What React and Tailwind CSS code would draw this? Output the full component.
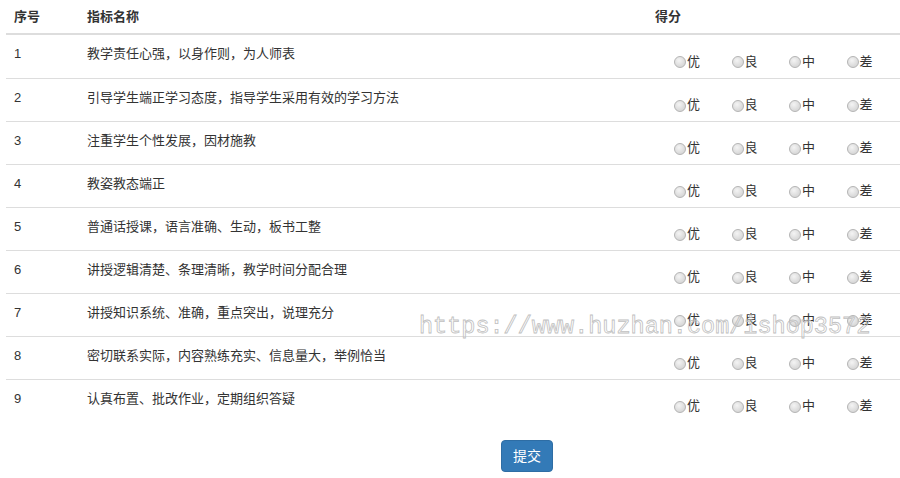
import React from "react";

const items = [
  "教学责任心强，以身作则，为人师表",
  "引导学生端正学习态度，指导学生采用有效的学习方法",
  "注重学生个性发展，因材施教",
  "教姿教态端正",
  "普通话授课，语言准确、生动，板书工整",
  "讲授逻辑清楚、条理清晰，教学时间分配合理",
  "讲授知识系统、准确，重点突出，说理充分",
  "密切联系实际，内容熟练充实、信息量大，举例恰当",
  "认真布置、批改作业，定期组织答疑",
];

const grades = ["优", "良", "中", "差"];

function Radio({ label }) {
  return (
    <div className="flex w-[57.5px] shrink-0 items-center">
      <span className="mt-[1px] inline-block h-[12px] w-[12px] rounded-full border border-[#b4b4b4] bg-[radial-gradient(circle_at_40%_35%,#f4f4f4_0%,#dcdcdc_60%,#cfcfcf_100%)]" />
      <span className="ml-[1px] text-[13px] leading-5 text-[#333]">{label}</span>
    </div>
  );
}

export default function App() {
  return (
    <div
      className="relative h-[478px] w-[900px] overflow-hidden bg-white text-[#333]"
      style={{ fontFamily: '"Liberation Sans", Arial, "Noto Sans CJK SC", sans-serif' }}
    >
      <div className="ml-[6px] w-[894px]">
        <div className="flex h-[35px] border-b-2 border-[#dddddd] pt-[7px] text-[13px] font-bold leading-5">
          <div className="w-[73px] shrink-0 pl-[8px]">序号</div>
          <div className="w-[568px] shrink-0 pl-[8px]">指标名称</div>
          <div className="pl-[8px]">得分</div>
        </div>
        {items.map((t, i) => (
          <div
            key={i}
            className={
              "flex text-[13px] leading-5 " +
              (i === 0 ? "h-[43px]" : "h-[43px] border-t border-[#dddddd]")
            }
          >
            <div className="w-[73px] shrink-0 pl-[8px] pt-[9px]">{i + 1}</div>
            <div className="w-[568px] shrink-0 pl-[8px] pt-[9px]">{t}</div>
            <div className="flex pl-[27px] pt-[10px]">
              {grades.map((g) => (
                <Radio key={g} label={g} />
              ))}
            </div>
          </div>
        ))}
      </div>
      <div className="mt-[18px] flex pl-[501px]">
        <button className="h-[32px] w-[52px] rounded-[4px] border border-[#2e6da4] bg-[#337ab7] text-[14px] text-white">
          提交
        </button>
      </div>
      <div
        className="pointer-events-none absolute left-[419px] top-[312px] text-[23.5px] leading-[30px] text-transparent [-webkit-text-stroke:0.8px_#c0c0c0]"
        style={{ fontFamily: '"Liberation Mono", "Courier New", monospace' }}
      >
        https://www.huzhan.com/ishop3572
      </div>
    </div>
  );
}
